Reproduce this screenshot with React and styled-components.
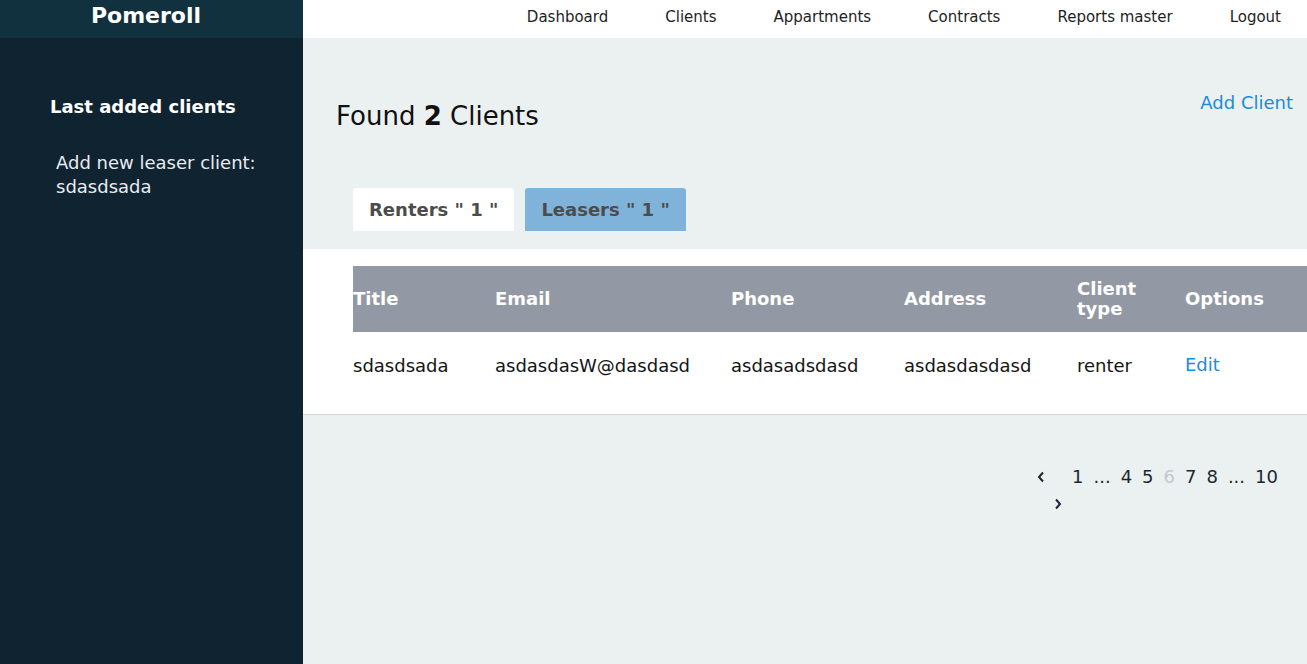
import React from 'react'
import styled, { createGlobalStyle } from 'styled-components'

const GlobalStyle = createGlobalStyle`
	html, body {
		margin: 0;
		padding: 0;
		font-family: "DejaVu Sans", "Liberation Sans", sans-serif;
	}
	* { box-sizing: border-box; }
`

const Layout = styled.div`
	display: grid;
	grid-template-columns: 303px 1fr;
	min-height: 664px;
`

const Sidebar = styled.aside`
	background: #0f2331;
	color: #fff;
`

const Brand = styled.div`
	height: 38px;
	background: #12313f;
	font-size: 22px;
	font-weight: bold;
	line-height: 32px;
	text-align: center;
	padding-right: 11px;
`

const SideTitle = styled.h4`
	margin: 58px 0 0 50px;
	font-size: 18px;
	line-height: 22px;
	font-weight: bold;
`

const SideItem = styled.p`
	margin: 33px 20px 0 56px;
	font-size: 18px;
	line-height: 24px;
	color: #e8ecef;
`

const Main = styled.main`
	display: flex;
	flex-direction: column;
	background: #ebf0f0;
	min-width: 0;
`

const TopNav = styled.nav`
	height: 38px;
	background: #fff;
	display: flex;
	justify-content: flex-end;
	align-items: flex-start;
	gap: 57px;
	padding-right: 26px;
`

const NavLink = styled.a`
	font-size: 15px;
	line-height: 35px;
	color: #1e1e1e;
	text-decoration: none;
`

const HeadRow = styled.div`
	display: flex;
	justify-content: space-between;
	align-items: flex-start;
	padding: 54px 14px 0 33px;
`

const Title = styled.h2`
	margin: 9px 0 0;
	font-size: 26px;
	line-height: 30px;
	font-weight: normal;
	color: #111;
	b { font-weight: bold; }
`

const LinkText = styled.a`
	font-size: 18px;
	line-height: 22px;
	color: #1b8dd6;
	text-decoration: none;
`

const Tabs = styled.div`
	display: flex;
	gap: 11px;
	margin: 57px 0 18px 50px;
`

const Tab = styled.button`
	height: 43px;
	padding: 0 16px;
	border: none;
	border-radius: 3px 3px 0 0;
	font-family: inherit;
	font-size: 18px;
	font-weight: bold;
	color: #4c4c4c;
	background: ${p => (p.$active ? '#7fb3da' : '#fff')};
`

const TableSection = styled.section`
	background: #fff;
	padding: 17px 0 16px 50px;
	border-bottom: 1px solid #d3d7d8;
`

const Table = styled.table`
	width: 100%;
	border-collapse: collapse;
	table-layout: fixed;
	font-size: 18px;
`

const Th = styled.th`
	height: 66px;
	padding: 0 10px 0 0;
	background: #9399a4;
	color: #fff;
	font-weight: bold;
	text-align: left;
	line-height: 20px;
`

const Td = styled.td`
	height: 66px;
	padding: 0 10px 0 0;
	color: #141414;
	white-space: nowrap;
`

const Pager = styled.ul`
	display: flex;
	flex-wrap: wrap;
	align-items: center;
	column-gap: 10px;
	list-style: none;
	margin: 48px 25px 0 auto;
	padding: 0;
	width: 262px;
	font-size: 18px;
	line-height: 27px;
	color: #1d2733;
`

const PageItem = styled.li`
	color: ${p => (p.$current ? '#c4c9cc' : 'inherit')};
`

const Arrow = styled.li`
	display: flex;
	align-items: center;
	height: 27px;
	padding: ${p => (p.$next ? '0 0 0 34px' : '0 17px')};
`

const Chevron = ({ dir }) => (
	<svg width="8" height="12" viewBox="0 0 8 12">
		<path
			d={dir === 'left' ? 'M6 1.5 L2 6 L6 10.5' : 'M2 1.5 L6 6 L2 10.5'}
			fill="none"
			stroke="#1d2733"
			strokeWidth="2"
		/>
	</svg>
)

const navLinks = ['Dashboard', 'Clients', 'Appartments', 'Contracts', 'Reports master', 'Logout']

const columns = [
	{ label: 'Title', width: 142 },
	{ label: 'Email', width: 236 },
	{ label: 'Phone', width: 173 },
	{ label: 'Address', width: 173 },
	{ label: 'Client type', width: 108 },
	{ label: 'Options', width: 122 },
]

const clients = [
	{ title: 'sdasdsada', email: 'asdasdasW@dasdasd', phone: 'asdasadsdasd', address: 'asdasdasdasd', type: 'renter' },
]

const pages = ['1', '...', '4', '5', '6', '7', '8', '...', '10']

export default function App() {
	return (
		<>
			<GlobalStyle />
			<Layout>
				<Sidebar>
					<Brand>Pomeroll</Brand>
					<SideTitle>Last added clients</SideTitle>
					<SideItem>Add new leaser client: sdasdsada</SideItem>
				</Sidebar>
				<Main>
					<TopNav>
						{navLinks.map(l => (
							<NavLink key={l} href="#">{l}</NavLink>
						))}
					</TopNav>
					<HeadRow>
						<Title>Found <b>2</b> Clients</Title>
						<LinkText href="#">Add Client</LinkText>
					</HeadRow>
					<Tabs>
						<Tab>Renters " 1 "</Tab>
						<Tab $active>Leasers " 1 "</Tab>
					</Tabs>
					<TableSection>
						<Table>
							<colgroup>
								{columns.map(c => <col key={c.label} style={{ width: c.width }} />)}
							</colgroup>
							<thead>
								<tr>
									{columns.map(c => <Th key={c.label}>{c.label}</Th>)}
								</tr>
							</thead>
							<tbody>
								{clients.map((c, i) => (
									<tr key={i}>
										<Td>{c.title}</Td>
										<Td>{c.email}</Td>
										<Td>{c.phone}</Td>
										<Td>{c.address}</Td>
										<Td>{c.type}</Td>
										<Td><LinkText href="#">Edit</LinkText></Td>
									</tr>
								))}
							</tbody>
						</Table>
					</TableSection>
					<Pager>
						<Arrow><Chevron dir="left" /></Arrow>
						{pages.map((p, i) => (
							<PageItem key={i} $current={p === '6'}>{p}</PageItem>
						))}
						<Arrow $next><Chevron dir="right" /></Arrow>
					</Pager>
				</Main>
			</Layout>
		</>
	)
}
